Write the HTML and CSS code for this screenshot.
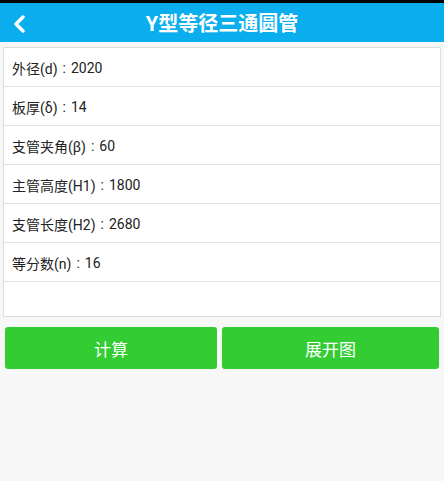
FILE: index.html
```html
<!DOCTYPE html>
<html>
<head>
  <meta charset="utf-8">
  <title>Y型等径三通圆管</title>
  <link rel="stylesheet" href="styles.css">
</head>
<body>
  <div class="statusbar"></div>
  <div class="header">
    <svg class="back" width="16" height="18" viewBox="0 0 16 18">
      <path d="M12 2 L5 9 L12 16" fill="none" stroke="#ffffff" stroke-width="3.4" stroke-linecap="round" stroke-linejoin="round"/>
    </svg>
    <h1>Y型等径三通圆管</h1>
  </div>
  <div class="list">
    <div class="row">外径(d)<span class="sep">:</span>2020</div>
    <div class="row">板厚(δ)<span class="sep">:</span>14</div>
    <div class="row">支管夹角(β)<span class="sep">:</span>60</div>
    <div class="row">主管高度(H1)<span class="sep">:</span>1800</div>
    <div class="row">支管长度(H2)<span class="sep">:</span>2680</div>
    <div class="row">等分数(n)<span class="sep">:</span>16</div>
    <div class="row empty"></div>
  </div>
  <div class="buttons">
    <button class="btn calc">计算</button>
    <button class="btn unfold">展开图</button>
  </div>
</body>
</html>
```

FILE: styles.css
```css
body {
  margin: 0;
  background: #f7f7f7;
  font-family: Roboto, "Noto Sans CJK SC", sans-serif;
  width: 444px;
  height: 481px;
  overflow: hidden;
}
.statusbar {
  height: 3px;
  background: #000000;
}
.header {
  height: 39px;
  background: #0aaeee;
  display: flex;
  align-items: center;
  justify-content: center;
  position: relative;
}
.back {
  position: absolute;
  left: 11px;
  top: 12px;
}
.header h1 {
  margin: 0;
  color: #ffffff;
  font-size: 20px;
  font-weight: bold;
}
.list {
  margin: 5px 3px 0 3px;
  background: #ffffff;
  border: 1px solid #dddddd;
}
.row {
  box-sizing: border-box;
  height: 39px;
  padding: 2px 0 0 8px;
  border-bottom: 1px solid #e2e2e2;
  display: flex;
  align-items: center;
  font-size: 14px;
  color: #222222;
}
.row .sep {
  margin: 0 5px;
}
.row.empty {
  height: 34px;
  border-bottom: none;
}
.buttons {
  display: flex;
  gap: 5px;
  padding: 10px 0 0 5px;
}
.btn {
  height: 42px;
  border: none;
  border-radius: 3px;
  background: #33cc33;
  color: #ffffff;
  font-family: Roboto, "Noto Sans CJK SC", sans-serif;
  font-size: 17px;
}
.calc {
  width: 212px;
}
.unfold {
  width: 217px;
}
```
